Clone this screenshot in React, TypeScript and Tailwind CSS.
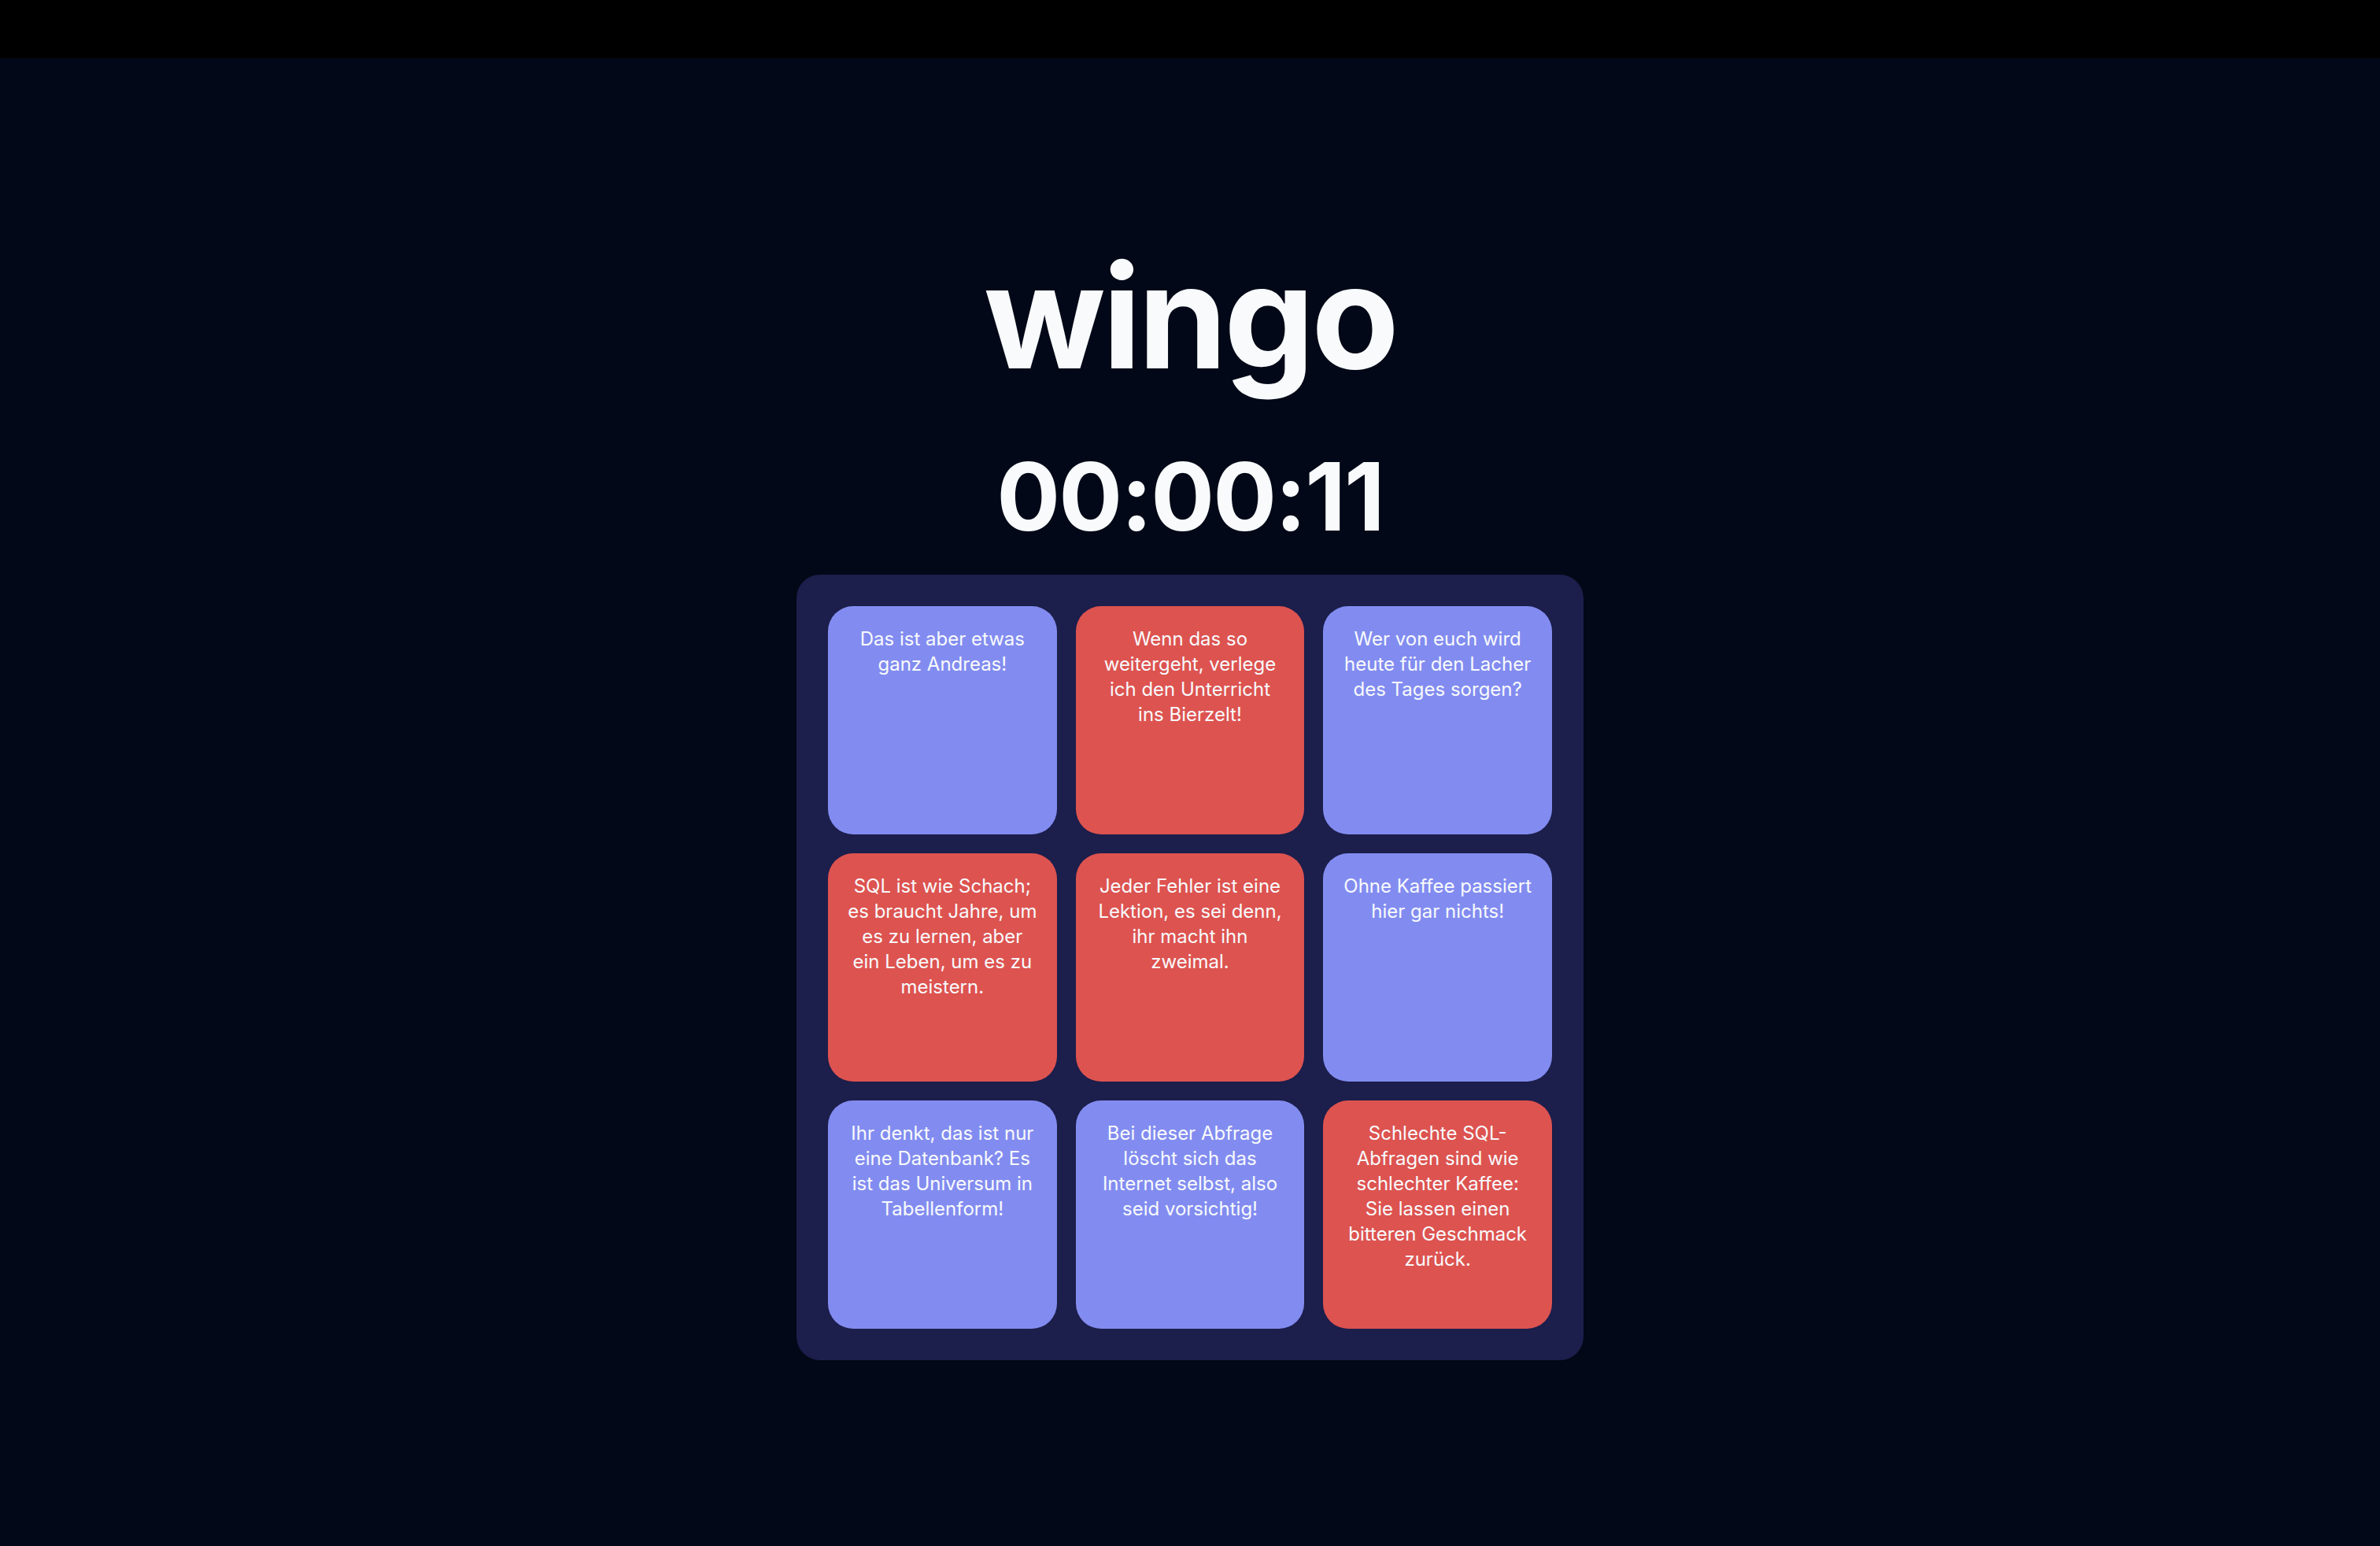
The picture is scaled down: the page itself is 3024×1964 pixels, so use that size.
import { useState } from 'react';

type Card = { text: string; marked: boolean };

const CARDS: Card[] = [
  { text: 'Das ist aber etwas ganz Andreas!', marked: false },
  { text: 'Wenn das so weitergeht, verlege ich den Unterricht ins Bierzelt!', marked: true },
  { text: 'Wer von euch wird heute für den Lacher des Tages sorgen?', marked: false },
  { text: 'SQL ist wie Schach; es braucht Jahre, um es zu lernen, aber ein Leben, um es zu meistern.', marked: true },
  { text: 'Jeder Fehler ist eine Lektion, es sei denn, ihr macht ihn zweimal.', marked: true },
  { text: 'Ohne Kaffee passiert hier gar nichts!', marked: false },
  { text: 'Ihr denkt, das ist nur eine Datenbank? Es ist das Universum in Tabellenform!', marked: false },
  { text: 'Bei dieser Abfrage löscht sich das Internet selbst, also seid vorsichtig!', marked: false },
  { text: 'Schlechte SQL-Abfragen sind wie schlechter Kaffee: Sie lassen einen bitteren Geschmack zurück.', marked: true },
];

function pad(n: number) {
  return n.toString().padStart(2, '0');
}

export default function App() {
  const [cards, setCards] = useState(CARDS);
  const [seconds] = useState(11);

  const h = Math.floor(seconds / 3600);
  const m = Math.floor((seconds % 3600) / 60);
  const s = seconds % 60;

  function toggle(i: number) {
    setCards((prev) => prev.map((c, j) => (j === i ? { ...c, marked: !c.marked } : c)));
  }

  return (
    <div
      className="flex h-[1964px] flex-col bg-[#020817] text-slate-50"
      style={{ fontFamily: 'Inter, "Noto Sans", sans-serif' }}
    >
      {/* Top bar */}
      <div className="h-[74px] shrink-0 bg-black" />

      <main className="flex flex-1 flex-col items-center justify-center">
        <h1 className="text-[182px] font-bold leading-none tracking-[-4px]">wingo</h1>
        <div className="mt-[78px] text-[120px] font-bold leading-none tracking-[-2px]">
          {pad(h)}:{pad(m)}:{pad(s)}
        </div>

        <div className="mt-[39px] grid w-[1000px] grid-cols-3 gap-6 rounded-[30px] bg-[#1c1e4b] p-10">
          {cards.map((c, i) => (
            <button
              key={i}
              onClick={() => toggle(i)}
              className={`flex h-[290px] flex-col items-center justify-start rounded-[32px] px-6 pt-[26px] text-center text-[24px] leading-[32px] text-slate-50 ${
                c.marked ? 'bg-[#dd5350]' : 'bg-[#828cf0]'
              }`}
            >
              {c.text}
            </button>
          ))}
        </div>
      </main>
    </div>
  );
}
